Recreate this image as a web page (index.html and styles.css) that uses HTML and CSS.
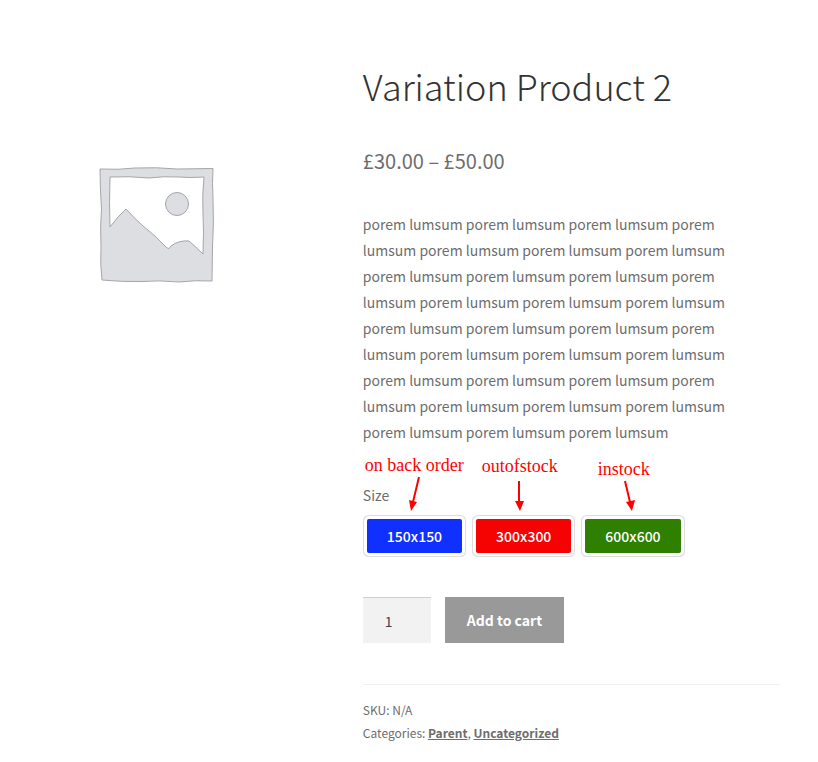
FILE: index.html
```html
<!DOCTYPE html>
<html lang="en">
<head>
  <meta charset="UTF-8" />
  <meta name="viewport" content="width=device-width, initial-scale=1.0"/>
  <title>Variation Product 2</title>
  <link rel="stylesheet" href="styles.css">
</head>
<body>

<main class="product">
  <div class="gallery">
    <svg class="placeholder" viewBox="0 0 116 116" role="img" aria-label="Awaiting product image">
      <path class="shape" fill-rule="evenodd" d="M1 2 Q20 3 36 1 Q58 0 78 2 L114 1.500 Q113 16 114 32 Q115 56 113.500 80 L113 114 Q96 113 80 115 Q60 113 42 114.500 Q24 115 3 113 Q1 98 2 80 Q1 60 2.500 42 Q1 20 1 2 Z M11 10 Q10 36 11 60 Q19 49 27 42 Q35 51 44 59 Q58 70 68 81 Q70 83 72 79 Q80 73 90 74 Q97 80 104 87 Q105 65 104 46 Q103 28 105 10 Q90 11 80 10 Q64 9 50 11 Q30 9 11 10 Z"/>
      <circle class="shape" cx="78" cy="37" r="11.500"/>
    </svg>
  </div>

  <div class="summary">
    <h1>Variation Product 2</h1>
    <p class="price">£30.00 – £50.00</p>
    <p class="description">porem lumsum porem lumsum porem lumsum porem lumsum porem lumsum porem lumsum porem lumsum porem lumsum porem lumsum porem lumsum porem lumsum porem lumsum porem lumsum porem lumsum porem lumsum porem lumsum porem lumsum porem lumsum porem lumsum porem lumsum porem lumsum porem lumsum porem lumsum porem lumsum porem lumsum porem lumsum porem lumsum porem lumsum porem lumsum porem lumsum porem lumsum</p>

    <form>
      <div class="variations">
        <span class="label" id="size-label">Size</span>
        <div class="swatches" role="group" aria-labelledby="size-label">
          <button type="button" class="swatch backorder">150x150</button>
          <button type="button" class="swatch outofstock">300x300</button>
          <button type="button" class="swatch instock">600x600</button>
        </div>

        <!-- stock notes over the swatches -->
        <span class="note note-backorder">on back order</span>
        <span class="note note-outofstock">outofstock</span>
        <span class="note note-instock">instock</span>
        <svg class="arrows" width="320" height="40" viewBox="0 0 320 40" aria-hidden="true">
          <path class="line" d="M56 3 L50 28 M156 7 L156 28 M262 7 L267 28"/>
          <path class="head" d="M46 26 L54 28 L48 37 Z M152 27 L161 27 L157 37 Z M263 28 L272 26 L269 37 Z"/>
        </svg>
      </div>

      <div class="cart">
        <input type="text" inputmode="numeric" class="qty" value="1" aria-label="Quantity">
        <button type="submit" class="add-to-cart">Add to cart</button>
      </div>
    </form>

    <div class="meta">
      <div>SKU: N/A</div>
      <div>Categories: <a href="#">Parent</a>, <a href="#">Uncategorized</a></div>
    </div>
  </div>
</main>

</body>
</html>
```
FILE: styles.css
```css
* {
  box-sizing: border-box;
}
body {
  margin: 0;
  background: #fff;
  color: #6d6d6d;
  font-family: "Noto Sans CJK SC", "Open Sans", sans-serif;
  font-size: 14px;
  line-height: 26px;
}
.product {
  display: grid;
  grid-template-columns: 3fr 4fr;
  gap: 50px;
  padding: 60px 38px 16px 0;
}
.gallery {
  padding: 107px 0 0 2px;
  text-align: center;
}
.placeholder {
  width: 116px;
  height: 116px;
}
.placeholder .shape {
  fill: #dddee2;
  stroke: #a6a6a8;
  stroke-width: 1;
}
h1 {
  margin: 0;
  color: #333;
  font-size: 36px;
  font-weight: 300;
  line-height: 50px;
}
.price {
  margin: 36px 0 35px;
  font-size: 20px;
  line-height: 30px;
}
.description {
  margin: 0;
  padding-right: 40px;
}
.variations {
  position: relative;
  padding-top: 37px;
}
.label {
  display: block;
}
.swatches {
  display: flex;
  flex-wrap: wrap;
  gap: 14px;
  margin-top: 7px;
  padding: 4px;
}
.swatch {
  height: 34px;
  padding: 0 20px;
  border: 0;
  border-radius: 2px;
  box-shadow: 0 0 0 3px #fff, 0 0 0 4px #ddd;
  color: #fff;
  font-family: inherit;
  font-size: 14px;
  font-weight: 500;
}
.backorder {
  background: #0f30ff;
}
.outofstock {
  background: #f50303;
}
.instock {
  background: #2f8000;
}
.note {
  position: absolute;
  color: #f00;
  font-family: "Liberation Serif", serif;
  font-size: 18px;
  line-height: 20px;
  white-space: nowrap;
}
.note-backorder {
  top: 10px;
  left: 2px;
}
.note-outofstock {
  top: 11px;
  left: 119px;
}
.note-instock {
  top: 14px;
  left: 235px;
}
.arrows {
  position: absolute;
  top: 29px;
  left: 0;
  pointer-events: none;
}
.arrows .line {
  fill: none;
  stroke: #f00;
  stroke-width: 2;
}
.arrows .head {
  fill: #f00;
}
.cart {
  display: flex;
  gap: 14px;
  margin-top: 40px;
}
.qty {
  width: 68px;
  height: 46px;
  padding: 0 22px;
  border: 0;
  border-top: 1px solid #d0d0d0;
  background: #f2f2f2;
  color: #43454b;
  font-family: inherit;
  font-size: 14px;
}
.add-to-cart {
  height: 46px;
  padding: 0 22px;
  border: 0;
  background: #999;
  color: #fff;
  font-family: inherit;
  font-size: 14px;
  font-weight: 700;
}
.meta {
  margin-top: 41px;
  padding-top: 13px;
  border-top: 1px solid #f0f0f0;
  font-size: 12px;
  line-height: 23px;
}
.meta a {
  color: #6d6d6d;
  font-weight: 700;
}
```
